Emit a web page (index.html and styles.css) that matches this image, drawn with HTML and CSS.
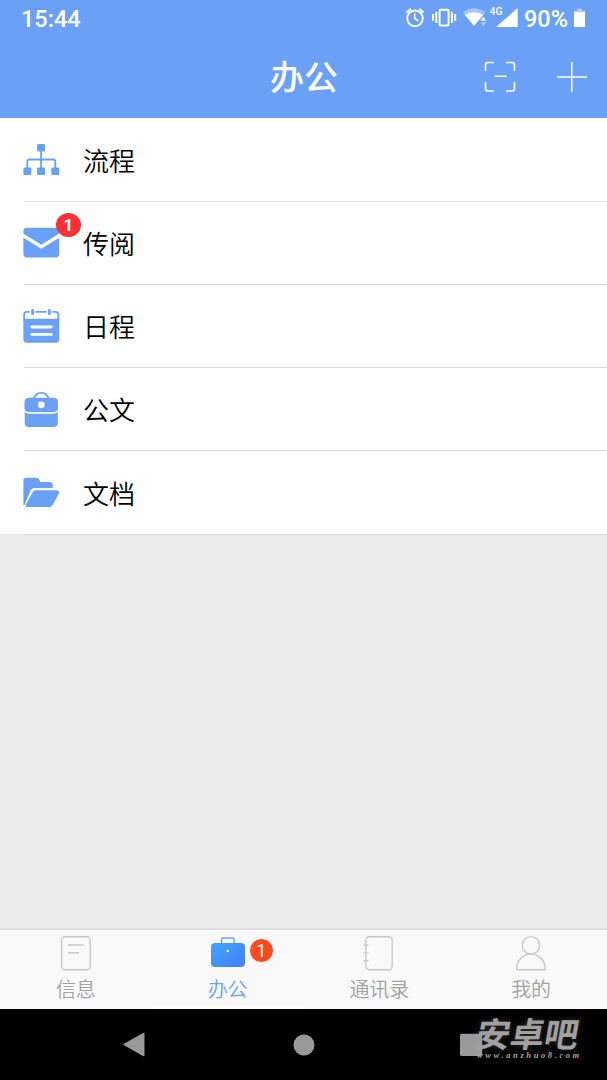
FILE: index.html
```html
<!DOCTYPE html>
<html lang="zh-CN">
<head>
    <meta charset="UTF-8">
    <meta name="viewport" content="width=device-width, initial-scale=1.0">
    <title>办公</title>
    <link rel="stylesheet" href="styles.css">
</head>
<body>
    <div class="app">
        <div class="top">
            <div class="status-bar">
                <span class="time">15:44</span>
                <div class="status-icons">
                    <!-- alarm -->
                    <svg width="27" height="36" viewBox="0 0 27 36" fill="none" stroke="#fff">
                        <circle cx="13" cy="18.3" r="7.8" stroke-width="1.9"/>
                        <path d="M4.5 12.5l4.3-3.7M21.5 12.5l-4.3-3.7" stroke-width="1.9"/>
                        <path d="M12.7 13.5v5l3.8 2.5" stroke-width="1.5"/>
                    </svg>
                    <!-- vibrate -->
                    <svg width="31" height="36" viewBox="0 0 31 36" fill="none" stroke="#fff" stroke-width="2">
                        <rect x="10.6" y="9.8" width="9" height="15.6" rx="1"/>
                        <path d="M4 14v7M7.3 12v11M22.9 12v11M26.2 14v7"/>
                    </svg>
                    <!-- wifi -->
                    <svg width="27" height="36" viewBox="0 0 27 36" fill="#fff">
                        <path d="M3 12.3Q14 4 25.3 12.3L14 26z" opacity=".4"/>
                        <path d="M4.9 15Q14 9.5 23.1 15L14 25.8z"/>
                        <path d="M19.8 21l3.4-4.7 3.4 4.7z" stroke="#6aa1f7" stroke-width=".6"/>
                        <path d="M20.6 22.500h5.600l-2.800 3.800z" opacity=".5"/>
                    </svg>
                    <!-- mobile signal -->
                    <svg width="31" height="36" viewBox="0 0 31 36">
                        <path d="M9 27L30.7 8v19z" fill="#fff"/>
                        <text class="net" x="2.500" y="14.600">4G</text>
                    </svg>
                    <span class="percent">90%</span>
                    <!-- battery -->
                    <svg width="11" height="36" viewBox="0 0 11 36" fill="#fff">
                        <path d="M3 8.500h5v2h3v2H0v-2h3z" opacity=".45"/>
                        <path d="M0 12h11v15H0z"/>
                    </svg>
                </div>
            </div>
            <div class="header">
                <h1>办公</h1>
                <div class="actions">
                    <svg width="32" height="32" viewBox="0 0 32 32" fill="none" stroke="#fff" stroke-width="1.6">
                        <path d="M1.500 10V4q0-2.500 2.500-2.500h6M22 1.500h6q2.500 0 2.500 2.500v6M30.500 21v6.500q0 2.500-2.500 2.500h-6M10 30H4q-2.500 0-2.500-2.500V21M10.500 15.300h12"/>
                    </svg>
                    <svg width="32" height="32" viewBox="0 0 32 32" stroke="#fff" stroke-width="1.5">
                        <path d="M1 15.900h30M15.800 1v30"/>
                    </svg>
                </div>
            </div>
        </div>

        <div class="content">
            <ul class="menu">
                <li class="menu-item tall">
                    <svg class="menu-icon" viewBox="0 0 44 40">
                        <path class="line" d="M21.100 10v20M7.300 30v-7.300q0-2.200 2.200-2.200h23.600q2.200 0 2.200 2.200V30"/>
                        <rect x="17.100" y="5" width="7.900" height="7.500" rx="1.200"/>
                        <rect x="3.400" y="28.600" width="7.900" height="7.500" rx="1.200"/>
                        <rect x="17.100" y="28.600" width="7.900" height="7.500" rx="1.200"/>
                        <rect x="31.300" y="28.600" width="7.900" height="7.500" rx="1.200"/>
                    </svg>
                    <span>流程</span>
                </li>
                <li class="menu-item">
                    <svg class="menu-icon" viewBox="0 0 44 40">
                        <rect x="3.400" y="4.800" width="35.800" height="29.600" rx="3.500"/>
                        <path class="cut" d="M1.500 11.500l19.800 12.200 19.800-12.200" stroke-width="3.600"/>
                    </svg>
                    <span class="badge">1</span>
                    <span>传阅</span>
                </li>
                <li class="menu-item">
                    <svg class="menu-icon" viewBox="0 0 44 40">
                        <path class="line" d="M4.200 15V8.500q0-2.600 2.600-2.600h3M15.500 5.900h11.200M32.300 5.900h3.400q2.600 0 2.600 2.600V15"/>
                        <path class="line post" d="M12.600 3.300v5.400M29.400 3.300v5.400"/>
                        <path d="M3.400 12.700h35.800v20.500q0 3.500-3.500 3.500H6.900q-3.500 0-3.500-3.500z"/>
                        <path class="cut" d="M11.800 21h19.400M11.800 28.400h19.400" stroke-width="2.800" stroke-linecap="round"/>
                    </svg>
                    <span>日程</span>
                </li>
                <li class="menu-item">
                    <svg class="menu-icon" viewBox="0 0 44 40">
                        <path class="line" d="M13.800 10C16 1.700 26.600 1.700 28.800 10"/>
                        <path d="M9 8.800h24.500q4.500 0 4.500 4.500v6q0 3.700-4.500 3.700H9q-4.500 0-4.500-3.700v-6q0-4.500 4.500-4.500z"/>
                        <path d="M4.700 22.800q1.800 2 4.300 2h24.500q2.500 0 4.300-2V34q0 4-4 4H8.700q-4 0-4-4z"/>
                        <circle cx="21.300" cy="15.800" r="3.400" fill="#fff"/>
                    </svg>
                    <span>公文</span>
                </li>
                <li class="menu-item tall">
                    <svg class="menu-icon" viewBox="0 0 44 40">
                        <path d="M3.400 33V9q0-3.200 3.200-3.200h9.600q3.400 0 3.900 4.300h9.300q3.300 0 3.300 3.300v2.500H15q-2.800 0-4.200 2.200L4.500 33z"/>
                        <path d="M15.600 18.200h20.600q4 0 2.700 3.200l-6 11q-1.400 2.700-4.200 2.700H7.500q-3 0-1.600-2.700l6.500-12q1.200-2.200 3.200-2.200z"/>
                    </svg>
                    <span>文档</span>
                </li>
            </ul>
        </div>

        <div class="tabs">
            <div class="tab">
                <svg class="tab-icon" viewBox="0 0 44 38">
                    <rect x="7.600" y="1.700" width="28.600" height="33" rx="3.500"/>
                    <path d="M14 10h15.500M14 17.800h11"/>
                </svg>
                <span>信息</span>
            </div>
            <div class="tab active">
                <svg class="tab-icon" viewBox="0 0 44 38">
                    <defs>
                        <linearGradient id="bag" x1="0" y1="0" x2="1" y2="1">
                            <stop offset="0" stop-color="#3fa6ff"/>
                            <stop offset="1" stop-color="#447cf6"/>
                        </linearGradient>
                    </defs>
                    <path class="handle" d="M15.500 9V4.500q0-1.500 1.500-1.500h9.700q1.500 0 1.500 1.500V9"/>
                    <rect x="5" y="8" width="34" height="24" rx="4" fill="url(#bag)" stroke="none"/>
                    <circle cx="21.800" cy="16" r="1.200" fill="#fff" stroke="none"/>
                </svg>
                <span class="tab-badge">1</span>
                <span>办公</span>
            </div>
            <div class="tab">
                <svg class="tab-icon" viewBox="0 0 44 38">
                    <rect x="8.900" y="1.700" width="26.300" height="33" rx="3.500"/>
                    <path d="M6.500 10h5M6.500 17.900h5M6.500 25.700h5"/>
                </svg>
                <span>通讯录</span>
            </div>
            <div class="tab">
                <svg class="tab-icon" viewBox="0 0 44 38">
                    <circle cx="22" cy="10.300" r="8.700"/>
                    <path d="M7.800 34.700v-1.500a14.200 14.200 0 0 1 28.400 0v1.500z"/>
                </svg>
                <span>我的</span>
            </div>
        </div>

        <div class="nav-bar">
            <svg width="24" height="26" viewBox="0 0 24 26"><path d="M2.500 12.500L21.500 1.800v21.400z" stroke-width="2"/></svg>
            <svg width="24" height="26" viewBox="0 0 24 26"><circle cx="12" cy="13" r="10.500"/></svg>
            <svg width="24" height="26" viewBox="0 0 24 26"><rect x="1" y="1.800" width="22.200" height="22.200" rx="1.500"/></svg>
            <div class="watermark">
                <div class="mark-name">安卓吧</div>
                <div class="mark-url">www.anzhuo8.com</div>
            </div>
        </div>
    </div>
</body>
</html>
```
FILE: styles.css
```css
* {
    margin: 0;
    padding: 0;
    box-sizing: border-box;
}

body {
    font-family: "Noto Sans CJK SC", sans-serif;
    background: #ececec;
}

svg {
    display: block;
    flex-shrink: 0;
}

.app {
    display: flex;
    flex-direction: column;
    height: 1080px;
    overflow: hidden;
}

.top {
    height: 118px;
    background: #6aa1f7;
    color: #fff;
}

.status-bar {
    display: flex;
    justify-content: space-between;
    height: 36px;
    padding: 0 22px 0 21px;
    font-family: Roboto, sans-serif;
    font-size: 23.5px;
    font-weight: 500;
    line-height: 38px;
}

.status-icons {
    display: flex;
}

.net {
    font-size: 10.5px;
    font-weight: 500;
    fill: #fff;
}

.percent {
    width: 56px;
    padding-left: 6px;
}

.header {
    display: flex;
    align-items: center;
    height: 82px;
    padding: 0 19px 0 270px;
    justify-content: space-between;
}

.header h1 {
    font-size: 34px;
    font-weight: 500;
    line-height: 80px;
    height: 82px;
}

.actions {
    display: flex;
    gap: 40px;
}

.content {
    flex: 1;
}

.menu {
    height: 416px;
    list-style: none;
    background: #fff;
}

.menu-item {
    position: relative;
    display: flex;
    height: 83px;
    margin-left: 24px;
    border-bottom: 1px solid #dcdcdc;
    font-size: 26px;
    font-weight: 350;
    line-height: 82px;
    color: #000;
}

.menu-item.tall {
    height: 84px;
    line-height: 84px;
}

.menu-icon {
    width: 44px;
    height: 40px;
    margin: 21px 19px 0 -4px;
    fill: #6aa1f7;
}

.menu-icon .line {
    fill: none;
    stroke: #6aa1f7;
    stroke-width: 1.8;
}

.menu-icon .post {
    stroke-width: 2.8;
}

.menu-icon .cut {
    fill: none;
    stroke: #fff;
}

.badge {
    position: absolute;
    left: 32px;
    top: 11px;
    width: 25px;
    height: 24px;
    border-radius: 50%;
    background: #fb3235;
    color: #fff;
    font-family: Roboto, sans-serif;
    font-size: 17px;
    font-weight: 700;
    line-height: 25px;
    text-align: center;
}

.tabs {
    display: flex;
    height: 81px;
    border-top: 2px solid #dfdfdf;
    background: #f9f9f9;
}

.tab {
    position: relative;
    flex: 1;
    display: flex;
    flex-direction: column;
    align-items: center;
    padding-top: 5px;
    color: #a3a3a3;
    font-size: 20px;
    font-weight: 350;
    line-height: 32px;
}

.tab.active {
    color: #6aa1f7;
    border-bottom: 3px solid #fff;
}

.tab-icon {
    width: 44px;
    height: 38px;
    fill: none;
    stroke: #c8c8c8;
    stroke-width: 1.4;
}

.tab-icon .handle {
    stroke: #6aa1f7;
}

.tab-badge {
    position: absolute;
    left: 97px;
    top: 8px;
    width: 25px;
    height: 25px;
    border: 1px solid #fff;
    border-radius: 50%;
    background: #ff4720;
    color: #fff;
    font-family: Roboto, sans-serif;
    font-size: 18px;
    font-weight: 400;
    line-height: 24px;
    text-align: center;
}

.nav-bar {
    position: relative;
    display: flex;
    justify-content: space-between;
    align-items: center;
    height: 71px;
    padding: 0 124px 0 122px;
    background: #000;
    fill: #999;
    stroke: #999;
    stroke-width: 0;
    stroke-linejoin: round;
}

.nav-bar svg:nth-child(2) {
    margin-left: 3px;
}

.watermark {
    position: absolute;
    left: 477px;
    top: 5px;
    width: 106px;
    color: #a0a0a0;
    text-shadow: 0 0 6px rgba(255, 255, 255, 0.2);
    white-space: nowrap;
}

.mark-name {
    font-size: 34px;
    font-weight: 700;
    line-height: 38px;
    transform: skewX(-10deg);
}

.mark-url {
    font-family: "Liberation Serif", serif;
    font-size: 8.5px;
    font-style: italic;
    font-weight: 700;
    letter-spacing: 2.6px;
    line-height: 6px;
}
```
